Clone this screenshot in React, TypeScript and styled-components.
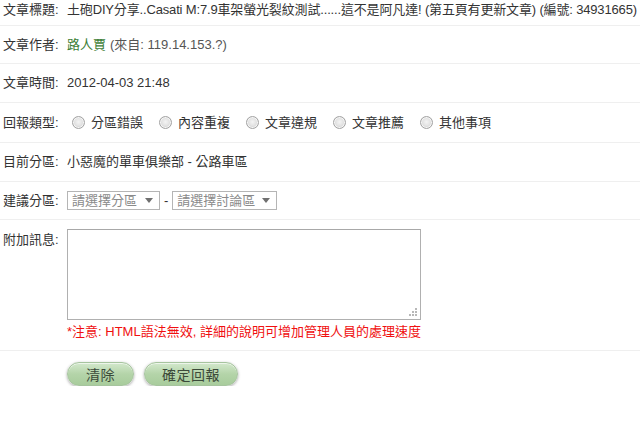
import React from "react";
import styled, { createGlobalStyle } from "styled-components";

const Global = createGlobalStyle`
  html, body { margin: 0; padding: 0; background: #fff; }
  body {
    font-family: "Liberation Sans", "Noto Sans CJK TC", sans-serif;
    font-size: 13px;
    color: #333;
    overflow: hidden;
  }
`;

const Form = styled.div`
  width: 640px;
  display: flex;
  flex-direction: column;
`;

const Row = styled.div<{ $h: number; $pt?: number; $top?: boolean }>`
  display: flex;
  align-items: ${(p) => (p.$top ? "flex-start" : "center")};
  height: ${(p) => p.$h}px;
  padding-top: ${(p) => p.$pt ?? 0}px;
  box-sizing: border-box;
  border-bottom: 1px solid #efefef;
  white-space: nowrap;
  line-height: 16px;
`;

const Label = styled.div<{ $pt?: number }>`
  width: 64px;
  padding-left: 3px;
  padding-top: ${(p) => p.$pt ?? 0}px;
  flex: none;
  color: #333;
`;

const Value = styled.div<{ $pt?: number; $tight?: boolean }>`
  display: flex;
  align-items: center;
  flex-direction: row;
  min-width: 0;
  padding-top: ${(p) => p.$pt ?? 0}px;
  letter-spacing: ${(p) => (p.$tight ? "-0.16px" : "normal")};
`;

const Column = styled.div`
  display: flex;
  flex-direction: column;
  align-items: flex-start;
`;

const Author = styled.span`
  color: #3d7d36;
`;

const Muted = styled.span`
  color: #555;
  margin-left: 4px;
`;

const RadioGroup = styled.div`
  display: flex;
  align-items: center;
  padding-left: 5px;
  gap: 16px;
`;

const RadioItem = styled.label`
  display: flex;
  align-items: center;
  gap: 6px;
`;

const RadioDot = styled.span`
  width: 13px;
  height: 13px;
  border-radius: 50%;
  box-sizing: border-box;
  border: 1px solid #a3a3a3;
  background: radial-gradient(circle at 50% 45%, #f4f4f4 0%, #e3e3e3 45%, #cfcfcf 75%, #e8e8e8 100%);
  box-shadow: inset 0 0 0 1px #f6f6f6;
  flex: none;
`;

const Select = styled.div<{ $w: number }>`
  width: ${(p) => p.$w}px;
  height: 19px;
  box-sizing: border-box;
  border: 1px solid #b5b5b5;
  background: #fff;
  color: #8a8a8a;
  display: flex;
  align-items: center;
  justify-content: space-between;
  padding: 0 6px 0 4px;
  font-size: 13px;
`;

const Arrow = styled.span`
  width: 0;
  height: 0;
  border-left: 4px solid transparent;
  border-right: 4px solid transparent;
  border-top: 5px solid #707070;
`;

const Dash = styled.span`
  margin: 0 4px;
  color: #333;
`;

const TextArea = styled.div`
  position: relative;
  width: 354px;
  height: 91px;
  box-sizing: border-box;
  border: 1px solid #b0b0b0;
  border-top-color: #a8a8a8;
  background: #fff;
`;

const Grip = styled.svg`
  position: absolute;
  right: 3px;
  bottom: 3px;
`;

const Note = styled.div`
  color: #f01010;
  margin-top: 4px;
  line-height: 16px;
`;

const Buttons = styled.div`
  display: flex;
  gap: 10px;
  padding: 11px 0 0 67px;
`;

const Button = styled.button<{ $w: number }>`
  width: ${(p) => p.$w}px;
  height: 24px;
  border-radius: 12px;
  border: 1px solid #a6c49e;
  background: linear-gradient(#d3e8cc, #b4d4a9 50%, #a8cc9c);
  box-shadow: 0 1px 3px rgba(0, 0, 0, 0.35), inset 0 1px 0 rgba(255, 255, 255, 0.6);
  color: #3c4a3a;
  font-family: "Noto Sans CJK TC", sans-serif;
  font-size: 14px;
  line-height: 20px;
  padding: 0;
  letter-spacing: 0.5px;
`;

const radios = ["分區錯誤", "內容重複", "文章違規", "文章推薦", "其他事項"];

export default function App() {
  return (
    <>
      <Global />
      <Form>
        <Row $h={26} $top>
          <Label $pt={2}>文章標題:</Label>
          <Value $pt={2} $tight>
            土砲DIY分享..Casati M:7.9車架螢光裂紋測試......這不是阿凡達! (第五頁有更新文章) (編號: 34931665)
          </Value>
        </Row>
        <Row $h={38}>
          <Label>文章作者:</Label>
          <Value>
            <Author>路人賈</Author>
            <Muted>(來自: 119.14.153.?)</Muted>
          </Value>
        </Row>
        <Row $h={39}>
          <Label>文章時間:</Label>
          <Value>2012-04-03 21:48</Value>
        </Row>
        <Row $h={40}>
          <Label>回報類型:</Label>
          <RadioGroup>
            {radios.map((r) => (
              <RadioItem key={r}>
                <RadioDot />
                {r}
              </RadioItem>
            ))}
          </RadioGroup>
        </Row>
        <Row $h={39}>
          <Label>目前分區:</Label>
          <Value>小惡魔的單車俱樂部 - 公路車區</Value>
        </Row>
        <Row $h={38}>
          <Label>建議分區:</Label>
          <Value>
            <Select $w={93}>
              請選擇分區
              <Arrow />
            </Select>
            <Dash>-</Dash>
            <Select $w={105}>
              請選擇討論區
              <Arrow />
            </Select>
          </Value>
        </Row>
        <Row $h={131} $pt={9} $top>
          <Label $pt={3}>附加訊息:</Label>
          <Column>
            <TextArea>
              <Grip width="9" height="9" viewBox="0 0 9 9">
                <rect x="7" y="1" width="2" height="2" fill="#b8b8b8" />
                <rect x="4" y="4" width="2" height="2" fill="#b8b8b8" />
                <rect x="7" y="4" width="2" height="2" fill="#b8b8b8" />
                <rect x="1" y="7" width="2" height="2" fill="#b8b8b8" />
                <rect x="4" y="7" width="2" height="2" fill="#b8b8b8" />
                <rect x="7" y="7" width="2" height="2" fill="#b8b8b8" />
              </Grip>
            </TextArea>
            <Note>*注意: HTML語法無效, 詳細的說明可增加管理人員的處理速度</Note>
          </Column>
        </Row>
        <Buttons>
          <Button $w={67}>清除</Button>
          <Button $w={94}>確定回報</Button>
        </Buttons>
      </Form>
    </>
  );
}
